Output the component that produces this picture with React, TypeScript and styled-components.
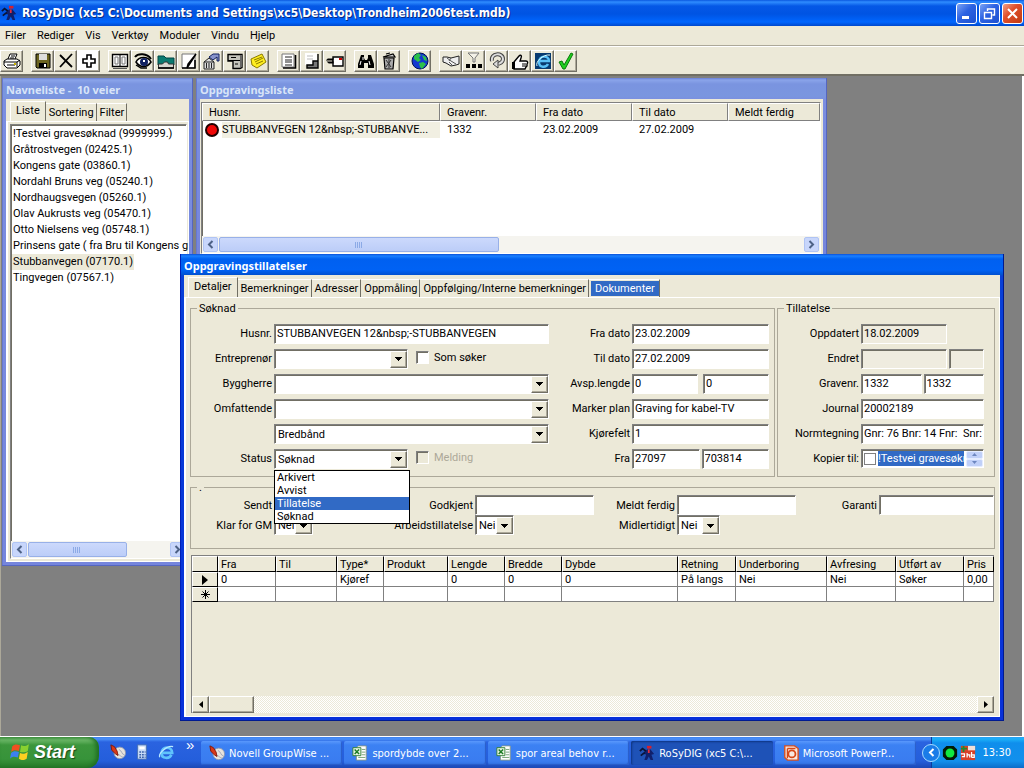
import React from "react";
import styled, { createGlobalStyle, css } from "styled-components";

const uiFont = `Roboto, "Liberation Sans", Arial, sans-serif`;
const tahoma = `"DejaVu Sans Condensed", "DejaVu Sans", sans-serif`;
const face = "#ece9d8";
const labelWidth = "83px";

const GlobalStyle = createGlobalStyle`
  * { box-sizing: border-box; }
  body { margin: 0; background: #808080; font: 11px/13px ${uiFont}; color: #000; }
  button, input, select { font: inherit; color: inherit; margin: 0; border-radius: 0; }
  button { padding: 0; }
  ul { margin: 0; padding: 0; list-style: none; }
`;

const raised = css`
  border: 1px solid;
  border-color: #fff #716f64 #716f64 #fff;
  box-shadow: inset -1px -1px 0 #aca899;
`;
const sunken = css`
  border: 1px solid;
  border-color: #808080 #fff #fff #808080;
  box-shadow: inset 1px 1px 0 #716f64;
`;

/* ---------- application frame ---------- */
const Screen = styled.div`
  display: flex;
  flex-direction: column;
  height: 100vh;
  overflow: hidden;
`;
const TitleBar = styled.header`
  display: flex;
  align-items: center;
  flex: none;
  height: 26px;
  padding: 0 1px 0 1px;
  gap: 5px;
  background: linear-gradient(#0a58e0 0, #2f8cff 2px, #0558e6 6px, #0054e3 14px, #0066ff 22px, #0048cc 26px);
`;
const AppTitle = styled.h1`
  flex: 1;
  margin: 0;
  font: bold 12px/18px ${tahoma};
  color: #fff;
  white-space: nowrap;
  text-shadow: 1px 1px 0 #0a2a80;
`;
const CaptionButtons = styled.div`
  display: flex;
  gap: 2px;
`;
const CaptionButton = styled.button<{ $close?: boolean }>`
  display: grid;
  place-items: center;
  width: 21px;
  height: 21px;
  border: 1px solid #fff;
  border-radius: 3px;
  background: ${(p) =>
    p.$close
      ? "linear-gradient(135deg, #f0a088, #e0502c 40%, #c03a10)"
      : "linear-gradient(135deg, #7ba3f5, #2c62e2 45%, #1c50d0)"};
`;
const MenuBar = styled.nav`
  display: flex;
  flex: none;
  gap: 11px;
  height: 20px;
  padding: 3px 5px;
  background: ${face};
  border-bottom: 1px solid #aca899;
`;
const MenuItem = styled.a`
  color: #000;
  text-decoration: none;
`;
const Toolbar = styled.div`
  display: flex;
  flex: none;
  gap: 8px;
  height: 30px;
  padding: 3px 0;
  background: ${face};
  border-top: 1px solid #fff;
  border-bottom: 2px solid #716f64;
`;
const ToolGroup = styled.div`
  display: flex;
`;
const ToolButton = styled.button<{ $light?: boolean }>`
  display: grid;
  place-items: center;
  width: 23px;
  height: 22px;
  background: ${(p) => (p.$light ? "#fff" : face)};
  ${raised}
`;
const Mdi = styled.main`
  position: relative;
  flex: 1;
  min-height: 0;
  overflow: hidden;
  background: #808080;
  border-left: 1px solid #aca899;
  border-right: 2px solid #fff;
`;

/* ---------- child windows ---------- */
const Win = styled.section<{ $x: number; $y: number; $w: number; $h: number; $active?: boolean }>`
  position: absolute;
  left: ${(p) => p.$x}px;
  top: ${(p) => p.$y}px;
  width: ${(p) => p.$w}px;
  height: ${(p) => p.$h}px;
  display: flex;
  flex-direction: column;
  padding: 0 4px 4px;
  background: ${(p) =>
    p.$active
      ? "linear-gradient(#0a50d8 0, #1a80ff 2px, #0060f0 5px, #0062f4 16px, #0050d0 21px, #0840d8 22px, #0831d9 100%)"
      : "linear-gradient(#6a80d8 0, #8aa4ea 2px, #7a94e0 6px, #7a96df 18px, #7b8ee0 22px, #7585dc 100%)"};
  box-shadow: inset -1px -1px 0 ${(p) => (p.$active ? "#001a90" : "#5566c0")}, inset 1px 0 0 ${(p) => (p.$active ? "#0020b8" : "#6678d0")};
`;
const WinTitle = styled.h2<{ $active?: boolean }>`
  flex: none;
  margin: 0;
  height: 21px;
  font: bold 11px/23px "Noto Sans", ${tahoma};
  color: ${(p) => (p.$active ? "#fff" : "#d8e4f8")};
  white-space: pre;
`;
const WinBody = styled.div<{ $pad?: string }>`
  flex: 1;
  min-height: 0;
  display: flex;
  flex-direction: column;
  padding: ${(p) => p.$pad ?? "0"};
  background: ${face};
`;
const TabStrip = styled.div`
  display: flex;
  align-items: flex-end;
  flex: none;
  height: 22px;
  padding-left: 4px;
`;
const Tab = styled.button<{ $selected?: boolean; $lit?: boolean }>`
  height: ${(p) => (p.$selected ? 20 : 18)}px;
  padding: ${(p) => (p.$selected ? "0 5px 2px 5px" : "0 2px 0 3px")};
  background: ${face};
  color: #000;
  border: 0;
  border-top: 1px solid #fff;
  border-right: 1px solid #716f64;
  white-space: nowrap;
  ${(p) => p.$selected && "border-left: 1px solid #fff;"}
  ${(p) => p.$lit && "padding: 1px 0 1px 2px; background: #316ac5 content-box; color: #fff;"}
`;
const TabText = styled.span<{ $lit?: boolean }>`
  display: block;
  padding: 0 ${(p) => (p.$lit ? 4 : 0)}px;
`;
const TabPane = styled.div<{ $pad: string }>`
  flex: 1;
  min-height: 0;
  display: flex;
  flex-direction: column;
  padding: ${(p) => p.$pad};
  border: 1px solid #fff;
  border-left-width: 2px;
`;

/* ---------- scroll bars ---------- */
const ScrollBar = styled.div`
  display: flex;
  flex: none;
  height: 17px;
  padding: 1px;
  gap: 1px;
  background: #f5f4ef;
`;
const ScrollArrow = styled.button`
  display: grid;
  place-items: center;
  flex: none;
  width: 15px;
  border: 1px solid #b0c4f4;
  border-radius: 2px;
  background: #c8d6fb;
`;
const ScrollTrack = styled.div`
  flex: 1;
  display: flex;
`;
const ScrollThumb = styled.div<{ $w: string }>`
  display: grid;
  place-items: center;
  width: ${(p) => p.$w};
  border: 1px solid #98b0e8;
  border-radius: 2px;
  background: linear-gradient(#ccd9fc, #bccdf8);
`;
const ClassicBar = styled.div`
  display: flex;
  flex: none;
  height: 17px;
  background: repeating-conic-gradient(#fff 0 25%, #ece9d8 0 50%) 0 0 / 2px 2px;
`;
const ClassicArrow = styled.button`
  display: grid;
  place-items: center;
  width: 17px;
  background: ${face};
  ${raised}
`;
const ClassicThumb = styled.div`
  width: 45px;
  margin-right: auto;
  background: ${face};
  ${raised}
`;

/* ---------- lists ---------- */
const ListFrame = styled.div`
  flex: 1;
  min-height: 0;
  display: flex;
  flex-direction: column;
  background: #fff;
  ${sunken}
`;
const Names = styled.ul`
  flex: 1;
  padding: 1px 0 0 1px;
`;
const NameItem = styled.li<{ $selected?: boolean }>`
  width: max-content;
  padding: 0 1px;
  line-height: 16px;
  white-space: nowrap;
  background: ${(p) => (p.$selected ? face : "transparent")};
`;
const DigTable = styled.table`
  width: 100%;
  table-layout: fixed;
  border-spacing: 0;
  th, td { padding: 0 6px; text-align: left; font-weight: normal; white-space: nowrap; }
  th { height: 18px; background: ${face}; border: 1px solid; border-color: #fff #808080 #808080 #fff; }
  td { height: 17px; padding: 0 7px; }
  td:first-child { padding: 0 0 0 3px; }
`;
const HouseCell = styled.div`
  display: flex;
  align-items: center;
  gap: 3px;
`;
const HouseText = styled.span`
  flex: 1;
  line-height: 16px;
  background: #f1efe2;
`;
const RedDot = styled.span`
  flex: none;
  width: 14px;
  height: 14px;
  border: 2px solid #200;
  border-radius: 50%;
  background: #f00808;
`;
const Spacer = styled.div`
  flex: 1;
`;

/* ---------- form ---------- */
const Groups = styled.div`
  display: flex;
  gap: 2px;
`;
const Group = styled.fieldset<{ $grow?: boolean; $pad: string; $top?: number }>`
  flex: ${(p) => (p.$grow ? "1" : "none")};
  display: flex;
  min-width: 0;
  margin: ${(p) => p.$top ?? 0}px 0 0;
  padding: ${(p) => p.$pad};
  border: 1px solid #aca899;
`;
const Legend = styled.legend`
  margin-left: 6px;
  padding: 0 2px;
  height: 13px;
`;
const Stack = styled.div<{ $w: number }>`
  width: ${(p) => p.$w}px;
`;
const Row = styled.div`
  display: grid;
  grid-template-columns: ${labelWidth} 1fr;
  align-items: center;
  height: 25px;
`;
const Label = styled.label`
  padding-right: 2px;
  text-align: right;
  white-space: nowrap;
`;
const Cell = styled.div`
  position: relative;
  display: flex;
  align-items: center;
  gap: 2px;
  min-width: 0;
`;
const TextBox = styled.input<{ $w?: number }>`
  flex: ${(p) => (p.$w ? "none" : "1")};
  width: ${(p) => (p.$w ? p.$w + "px" : "100%")};
  min-width: 0;
  height: 20px;
  padding: 0 0 0 2px;
  outline: 0;
  background: ${(p) => (p.readOnly ? "#efecdf" : "#fff")};
  ${sunken}
`;
const ComboFrame = styled.div<{ $w?: number }>`
  position: relative;
  width: ${(p) => (p.$w ? p.$w + "px" : "100%")};
  height: 20px;
`;
const ComboSelect = styled.select`
  appearance: none;
  width: 100%;
  height: 20px;
  padding: 1px 18px 0 3px;
  outline: 0;
  background: #fff;
  ${sunken}
`;
const ComboArrow = styled.span`
  position: absolute;
  top: 2px;
  right: 1px;
  bottom: 1px;
  width: 17px;
  display: grid;
  place-items: center;
  pointer-events: none;
  background: ${face};
  ${raised}
`;
const CheckLabel = styled.label<{ $off?: boolean }>`
  display: flex;
  align-items: center;
  gap: 5px;
  margin-left: 6px;
  padding-bottom: 3px;
  white-space: nowrap;
  color: ${(p) => (p.$off ? "#aca899" : "#000")};
`;
const CheckBox = styled.input<{ $flat?: boolean }>`
  appearance: none;
  flex: none;
  width: 13px;
  height: 13px;
  background: #fff;
  ${sunken}
  ${(p) => p.disabled && `background: ${face};`}
  ${(p) => p.$flat && "width: 12px; height: 12px; border-color: #808080; box-shadow: none;"}
`;
const DropList = styled.ul`
  position: absolute;
  z-index: 5;
  top: 21px;
  left: 0;
  width: 136px;
  background: #fff;
  border: 1px solid #000;
`;
const DropItem = styled.li<{ $selected?: boolean }>`
  height: 13px;
  padding-left: 2px;
  color: ${(p) => (p.$selected ? "#fff" : "#000")};
  background: ${(p) => (p.$selected ? "#316ac5" : "#fff")};
`;
const CopyBox = styled.div`
  display: flex;
  align-items: center;
  flex: 1;
  min-width: 0;
  height: 19px;
  padding-left: 2px;
  gap: 2px;
  background: #fff;
  ${sunken}
`;
const CopyText = styled.span`
  flex: 1;
  overflow: hidden;
  line-height: 15px;
  white-space: nowrap;
  color: #fff;
  background: #316ac5;
`;
const Spinner = styled.span`
  display: grid;
  grid-template-rows: 8px 8px;
  width: 17px;
`;
const SpinButton = styled.button`
  display: grid;
  place-items: center;
  border: 1px solid #e4ecff;
  border-radius: 2px;
  background: #c0d0f8;
`;
const DateGrid = styled.div`
  flex: 1;
  display: grid;
  grid-template-columns: 83px 119px 82px 119px 83px 119px 83px 1fr;
  grid-auto-rows: 20px;
  align-items: center;
`;

/* ---------- data grid ---------- */
const GridFrame = styled.div`
  flex: 1;
  min-height: 0;
  display: flex;
  flex-direction: column;
  margin: 6px 1px 0 1px;
  border-top: 1px solid #808080;
  border-left: 1px solid #808080;
  overflow: hidden;
`;
const DataTable = styled.table`
  width: 100%;
  table-layout: fixed;
  border-spacing: 0;
  th, td { height: 15px; padding: 0 2px; text-align: left; font-weight: normal; line-height: 13px; white-space: nowrap; overflow: hidden; }
  th { background: ${face}; border: 1px solid; border-color: #fff #000 #000 #fff; }
  thead th { height: 16px; }
  tbody th { padding: 0; text-align: center; }
  td { background: #fff; border-right: 1px solid #808080; border-bottom: 1px solid #808080; padding-left: 3px; }
`;
const RowMark = styled.svg`
  display: block;
  margin: 0 auto;
`;

/* ---------- task bar ---------- */
const TaskBar = styled.footer`
  display: flex;
  flex: none;
  height: 32px;
  border-top: 1px solid #fff;
  background: linear-gradient(#3c80ee 0, #4a90f8 2px, #2a63e0 5px, #245edb 24px, #1c48b4 31px);
  font-family: ${tahoma};
  color: #fff;
`;
const StartButton = styled.button`
  display: flex;
  align-items: center;
  gap: 4px;
  width: 99px;
  padding: 0 0 2px 10px;
  border: 0;
  border-radius: 0 10px 12px 0;
  background: linear-gradient(#5aac5a 0, #6cb868 3px, #3c963c 8px, #37933a 22px, #267a28 31px);
  box-shadow: inset -3px 0 4px #1f6e22;
  font: italic bold 18px/24px "Liberation Sans", sans-serif;
  color: #fff;
  text-shadow: 1px 1px 1px #1a4a1a;
`;
const QuickLaunch = styled.div`
  display: flex;
  align-items: center;
  gap: 8px;
  width: 102px;
  padding: 0 0 2px 11px;
`;
const Chevrons = styled.span`
  align-self: flex-start;
  margin-left: 4px;
  font: 15px/15px "Liberation Sans", sans-serif;
`;
const Tasks = styled.div`
  flex: 1;
  display: flex;
  gap: 2px;
  padding: 4px 15px 3px 0;
  min-width: 0;
`;
const Task = styled.button<{ $active?: boolean }>`
  flex: 1;
  display: flex;
  align-items: center;
  gap: 4px;
  min-width: 0;
  padding-left: 8px;
  border: 0;
  border-radius: 2px;
  color: #fff;
  white-space: nowrap;
  background: ${(p) => (p.$active ? "#1e52b7" : "linear-gradient(#5a98fc, #3c81f3 4px, #3a7cf0 20px, #3070e0)")};
  box-shadow: ${(p) => (p.$active ? "inset 1px 1px 2px #0e3480" : "inset -1px -1px 1px #2a5cc8")};
`;
const Tray = styled.div`
  display: flex;
  align-items: center;
  width: 93px;
  gap: 2px;
  padding-right: 13px;
  border-left: 1px solid #0c3c9c;
  background: linear-gradient(#2aa0f4 0, #1cb0f8 2px, #0f8eec 6px, #1290ec 24px, #0c6cc8 31px);
`;
const TrayToggle = styled.button`
  flex: none;
  display: grid;
  place-items: center;
  width: 18px;
  height: 18px;
  margin-left: -10px;
  border: 1px solid #a8dcff;
  border-radius: 50%;
  background: #1a7ce8;
`;
const Clock = styled.time`
  margin-left: auto;
`;

/* ---------- drawings ---------- */
const glyphs: Record<string, React.ReactNode> = {
  print: <><path d="M5 7l2-5h7l-2 5M1 9l3-2h10l3 2v4l-3 3H4l-3-3z" fill="#fff" stroke="#000" /><path d="M1 10h13v5M14 10l3-2M4 13h8M8 4h4M7 6h4" fill="none" stroke="#000" /><path d="M11 11h2v2h-2z" fill="#c8b400" /></>,
  save: <><path d="M2 2h14v14H3l-1-1z" fill="#6b6420" stroke="#000" /><path d="M5 2h8v6H5z" fill="#ddd" /><path d="M5 11h8v5H5z" fill="#000" /><path d="M10 12h2v3h-2z" fill="#fff" /></>,
  cut: <path d="M3 3l12 12M15 2L3 15" stroke="#000" strokeWidth="1.8" fill="none" />,
  plus: <path d="M7 3h4v4h4v4h-4v4H7v-4H3V7h4z" fill="#fff" stroke="#000" strokeWidth="1.6" />,
  book: <><path d="M1.500 2.500h15v12h-15z" fill="#fff" stroke="#000" strokeWidth="1.4" /><path d="M9 3v11" stroke="#000" /><path d="M4 5h3v7H4zM11 5h3v7h-3z" fill="none" stroke="#777" /><path d="M2 16.500h14" stroke="#555" /></>,
  eye: <><path d="M1 5c3-4 12-4 16 2" fill="none" stroke="#000" strokeWidth="2" /><path d="M2 10c3-6 12-6 15 0-4 6-11 6-15 0z" fill="#fff" stroke="#000" strokeWidth="1.6" /><circle cx="10" cy="10" r="4" fill="#102060" /><path d="M9 8h2v2H9z" fill="#fff" /><path d="M2 13l5 3h6" fill="none" stroke="#000" strokeWidth="1.4" /></>,
  folder: <><path d="M1 4h6l2 2h8v7H1z" fill="#0a7a70" stroke="#044" /><path d="M1.500 16v-4h4l2-2h3l1 2h5v4z" fill="#d8d8d0" stroke="#333" /><path d="M1 16h16" stroke="#000" strokeWidth="1.6" /></>,
  pencil: <><path d="M2 2h13v14H2z" fill="#fff" stroke="#777" /><path d="M16 2L9 13l-2 3 1-4z" fill="#fff" stroke="#000" strokeWidth="1.4" /><path d="M2 16h13V8" stroke="#000" fill="none" strokeWidth="1.6" /></>,
  bank: <><path d="M1 10l5-4 5 4v7H1z" fill="#ddd" stroke="#222" /><path d="M3.500 11v5M6 11v5M8.500 11v5M1 10h10" stroke="#222" /><path d="M6 5l4-3h6v7h-2V5l-4 3z" fill="#8894cc" stroke="#102060" /></>,
  cabinet: <><path d="M2 2.500h14v13l-2 1H7V9H2z" fill="#c4c4bc" stroke="#000" strokeWidth="1.4" /><path d="M14 3h2v12l-2 1z" fill="#666" /><path d="M2 8.500h12M5 5.500h5M9 12h3" stroke="#000" /></>,
  note: <><path d="M2 7l11-5 4 8-9 6-5-3z" fill="#ffee20" stroke="#8a7a00" /><path d="M5 8l8-3M6 10l8-4M7 12l7-3" stroke="#8a7a00" /></>,
  doc: <><path d="M2 2h12v13H2z" fill="#fff" stroke="#777" /><path d="M15.500 3v13H3" fill="none" stroke="#000" strokeWidth="1.6" /><path d="M5 5h7M5 8h7M5 10h7M5 13h7" stroke="#222" /></>,
  page: <><path d="M2 1h12v12H2z" fill="#fff" /><path d="M15 2v14H4v-3h6V9h5" fill="#777" stroke="#000" strokeWidth="1.4" /><path d="M4 4h6M4 7h6" stroke="#bbb" /></>,
  letter: <><path d="M7 5h10v9H7z" fill="#fff" stroke="#000" strokeWidth="1.4" /><path d="M8 7H2l-1 1h6v3H3l-1-1h5" fill="#fff" stroke="#000" strokeWidth="1.2" /><path d="M13 6h3v2h-3z" fill="#c00" /></>,
  find: <><path d="M4 3h3v3l1 2h2l1-2V3h3l3 9v4h-6v-5H7v5H1v-4z" fill="#000" /><path d="M4 9l-1 4M12 9l1 4M6 5v3" stroke="#fff" /></>,
  trash: <><path d="M4 6h10l-1 11H5z" fill="#aaa" stroke="#000" strokeWidth="1.2" /><path d="M3 5l10-3 2 3zM6 2l4-1" fill="#ccc" stroke="#000" strokeWidth="1.2" /><path d="M6 8l5 7M11 8l-5 7M9 7v9" stroke="#333" /></>,
  globe: <><circle cx="9" cy="9" r="8" fill="#1438d0" stroke="#001050" /><path d="M3 4l4-3 3 2-2 3 2 2-3 2-4-3zM11 3l4 2 1 4-3-1zM8 11l4-1 3 2-4 5-2-2z" fill="#2cc04a" /></>,
  shake: <><path d="M1 5h4l4 1 4-1 4-1v8l-3 1-5 1-5-3-3-1z" fill="#eee" stroke="#222" /><path d="M5 6l4 3 5 3M7 10l3 3M9 6l-2 3" fill="none" stroke="#555" /></>,
  filter: <><path d="M3 1h11l-4 5v4H8V6z" fill="#f4f2e8" stroke="#777" /><path d="M1 12h4v4H1zM7 12h4v4H7zM13 12h4v4h-4z" fill="#000" /></>,
  loop: <><path d="M4 9c-2-8 11-9 11-2 0 4-3 4-5 5" fill="none" stroke="#444" strokeWidth="4" /><path d="M4 9c-2-8 11-9 11-2 0 4-3 4-5 5" fill="none" stroke="#ddd" strokeWidth="2" /><path d="M10 8v8l-5-4z" fill="#ddd" stroke="#444" /></>,
  thumb: <><path d="M3 10l5-6c2-2 3 0 2 2l-1 3h6c2 0 2 2 1 3v2l-1 1-1 2H3z" fill="#fff" stroke="#000" strokeWidth="1.4" /><path d="M1 10h3v7H1z" fill="#000" /><path d="M11 12h4M11 14h4" stroke="#000" /></>,
  ie: <><path d="M1 1h16v16H1z" fill="#083a70" /><path d="M14 12c-2 4-9 4-9-2 0-7 10-7 10-1H6" fill="none" stroke="#58c0f8" strokeWidth="2.4" /><path d="M3 14C1 10 9 2 16 3" fill="none" stroke="#dff" /></>,
  check: <path d="M2 10l3-1 2 4 7-12 2 1-8 15H6z" fill="#20d020" stroke="#0a7a0a" />,
  surveyor: <><path d="M1 7l3-3 4 3-2 3M2 12l5-4" stroke="#081438" strokeWidth="2" fill="none" /><path d="M9 1h5v3H9z" fill="#d8202c" /><path d="M9 5h4l4 5-3 1 2 6h-3l-2-4-2 4H6l2-6-2-2z" fill="#10206c" /><path d="M10 5h2v4h-2z" fill="#e03040" /></>,
  groupwise: <><circle cx="11" cy="10" r="6.5" fill="#e8e4dc" stroke="#8a96b0" /><path d="M10 6c4 2 3 6 6 6M7 12c3-2 5 3 7 2" stroke="#9aa2b8" fill="none" /><path d="M1 1l4 2 3 5 1 5-3-2-4-4z" fill="#d83818" stroke="#801808" /></>,
  calc: <><path d="M4 1h10v16H4z" fill="#c8dcf8" stroke="#4870b0" /><path d="M6 3h6v3H6z" fill="#fff" /><path d="M6 9h7M6 12h7M6 15h7" stroke="#3860a8" strokeWidth="1.6" strokeDasharray="2 1" /></>,
  explorer: <><path d="M15 12c-2 5-11 5-11-2 0-8 12-8 12 0H5" fill="none" stroke="#60c4fc" strokeWidth="3" /><path d="M2 15C0 11 10 1 17 3" fill="none" stroke="#b8e8ff" strokeWidth="1.4" /></>,
  excel: <><path d="M7 1h9v16H5V3z" fill="#fff" stroke="#8a9a8a" /><path d="M11 5h4M11 8h4M11 11h4M7 14h8" stroke="#6a9a6a" /><path d="M1 3h9v9H1z" fill="#e8f4e0" stroke="#2a7a30" /><path d="M3 5l5 5M8 5l-5 5" stroke="#1a7a24" strokeWidth="1.6" /></>,
  ppt: <><path d="M2 1h11l4 3v13H5l-3-3z" fill="#f8e8e0" stroke="#d85020" strokeWidth="1.6" /><circle cx="10" cy="10" r="4" fill="none" stroke="#d84818" strokeWidth="2" /><path d="M5 4h9M5 4v11" stroke="#d84818" strokeWidth="1.6" /></>,
  flag: <><path d="M2 4c2-2 4-2 7-1L8 8C5 7 3 7 1 9z" fill="#f05020" /><path d="M10 3c2 1 4 1 7-1l-1 6c-3 2-5 1-7 1z" fill="#88d030" /><path d="M1 10c2-2 4-2 7-1l-1 5c-3-1-5-1-7 1z" fill="#3c80f0" /><path d="M9 10c2 1 4 1 7-1l-1 6c-3 2-5 1-7 0z" fill="#fcd020" /></>,
  greendot: <><path d="M5 1h8l4 4v8l-4 4H5l-4-4V5z" fill="#031a06" /><circle cx="9" cy="9" r="5" fill="#10e840" /></>,
  library: <><path d="M1 1h16v16H1z" fill="#d84028" /><path d="M9 1h8v5H9z" fill="#f0e0d8" /><path d="M1 4h7M4 1v7" stroke="#208a30" strokeWidth="2" /><path d="M1 10h4v3H2M8 9v5M8 11h3v3M13 8v6M13 11h3v3h-3" stroke="#fff" strokeWidth="1.4" fill="none" /></>,
};

const Icon = ({ name, size = 18 }: { name: string; size?: number }) => (
  <svg width={size} height={size} viewBox="0 0 18 18" aria-hidden="true">{glyphs[name]}</svg>
);
const DownArrow = () => (
  <svg width="7" height="4" viewBox="0 0 7 4" shapeRendering="crispEdges"><path d="M0 0h7L3.5 4z" /></svg>
);
const Chevron = ({ right, color = "#4d6185" }: { right?: boolean; color?: string }) => (
  <svg width="7" height="9" viewBox="0 0 7 9">
    <path d={right ? "M1.5 1L5 4.5 1.5 8" : "M5.5 1L2 4.5 5.5 8"} fill="none" stroke={color} strokeWidth="2" />
  </svg>
);
const Grip = () => (
  <svg width="8" height="6" viewBox="0 0 8 6"><path d="M.5 0v6M2.5 0v6M4.5 0v6M6.5 0v6" stroke="#8caae6" /></svg>
);

const LunaScroll = ({ thumb }: { thumb: string }) => (
  <ScrollBar>
    <ScrollArrow aria-label="Rull til venstre"><Chevron /></ScrollArrow>
    <ScrollTrack><ScrollThumb $w={thumb}><Grip /></ScrollThumb></ScrollTrack>
    <ScrollArrow aria-label="Rull til høyre"><Chevron right /></ScrollArrow>
  </ScrollBar>
);

const Combo = ({ id, value = "", width, options }: { id: string; value?: string; width?: number; options?: string[] }) => (
  <ComboFrame $w={width}>
    <ComboSelect id={id} defaultValue={value}>
      {(options ?? [value]).map((o) => <option key={o}>{o}</option>)}
    </ComboSelect>
    <ComboArrow><DownArrow /></ComboArrow>
  </ComboFrame>
);

const Field = ({ id, label, children }: { id: string; label?: string; children: React.ReactNode }) => (
  <Row>
    {label ? <Label htmlFor={id}>{label}</Label> : <span />}
    <Cell>{children}</Cell>
  </Row>
);

/* ---------- data ---------- */
const menus = ["Filer", "Rediger", "Vis", "Verktøy", "Moduler", "Vindu", "Hjelp"];
const tools = [
  ["print"],
  ["save", "cut", "plus"],
  ["book", "eye", "folder", "pencil", "bank", "cabinet", "note"],
  ["doc", "page", "letter"],
  ["find", "trash"],
  ["globe"],
  ["shake", "filter", "loop", "thumb", "ie", "check"],
];
const roads = [
  "!Testvei gravesøknad (9999999.)", "Gråtrostvegen (02425.1)", "Kongens gate (03860.1)",
  "Nordahl Bruns veg (05240.1)", "Nordhaugsvegen (05260.1)", "Olav Aukrusts veg (05470.1)",
  "Otto Nielsens veg (05748.1)", "Prinsens gate ( fra Bru til Kongens g", "Stubbanvegen (07170.1)",
  "Tingvegen (07567.1)",
];
const statuses = ["Arkivert", "Avvist", "Tillatelse", "Søknad"];
const columns: [string, number, string][] = [
  ["Fra", 58, "0"], ["Til", 61, ""], ["Type*", 47, "Kjøref"], ["Produkt", 64, ""], ["Lengde", 57, "0"],
  ["Bredde", 57, "0"], ["Dybde", 116, "0"], ["Retning", 58, "På langs"], ["Underboring", 91, "Nei"],
  ["Avfresing", 69, "Nei"], ["Utført av", 68, "Søker"], ["Pris", 0, "0,00"],
];
const tasks: [string, string][] = [
  ["groupwise", "Novell GroupWise ..."], ["excel", "spordybde over 2..."], ["excel", "spor areal behov r..."],
  ["surveyor", "RoSyDIG (xc5 C:\\..."], ["ppt", "Microsoft PowerP..."],
];

const NameWindow = () => (
  <Win $x={1} $y={2} $w={191} $h={488}>
    <WinTitle>{"Navneliste -  10 veier"}</WinTitle>
    <WinBody>
      <TabStrip>
        <Tab $selected><TabText>Liste</TabText></Tab>
        <Tab><TabText>Sortering</TabText></Tab>
        <Tab><TabText>Filter</TabText></Tab>
      </TabStrip>
      <TabPane $pad="2px 1px 2px 2px">
        <ListFrame>
          <Names>
            {roads.map((r) => <NameItem key={r} $selected={r.startsWith("Stubban")}>{r}</NameItem>)}
          </Names>
          <LunaScroll thumb="70%" />
        </ListFrame>
      </TabPane>
    </WinBody>
  </Win>
);

const DigWindow = () => (
  <Win $x={195} $y={2} $w={631} $h={181}>
    <WinTitle>Oppgravingsliste</WinTitle>
    <WinBody $pad="3px 2px 1px 1px">
      <ListFrame>
        <DigTable>
          <colgroup><col width="238" /><col width="96" /><col width="96" /><col width="96" /><col /></colgroup>
          <thead>
            <tr>{["Husnr.", "Gravenr.", "Fra dato", "Til dato", "Meldt ferdig"].map((h) => <th key={h}>{h}</th>)}</tr>
          </thead>
          <tbody>
            <tr>
              <td><HouseCell><RedDot /><HouseText>STUBBANVEGEN 12&amp;nbsp;-STUBBANVE...</HouseText></HouseCell></td>
              <td>1332</td><td>23.02.2009</td><td>27.02.2009</td><td />
            </tr>
          </tbody>
        </DigTable>
        <Spacer />
        <LunaScroll thumb="48%" />
      </ListFrame>
    </WinBody>
  </Win>
);

const PermitWindow = () => (
  <Win $active $x={179} $y={178} $w={824} $h={467}>
    <WinTitle $active>Oppgravingstillatelser</WinTitle>
    <WinBody>
      <TabStrip>
        <Tab $selected><TabText>Detaljer</TabText></Tab>
        {["Bemerkninger", "Adresser", "Oppmåling", "Oppfølging/Interne bemerkninger"].map((t) => (
          <Tab key={t}><TabText>{t}</TabText></Tab>
        ))}
        <Tab $lit><TabText $lit>Dokumenter</TabText></Tab>
      </TabStrip>
      <TabPane $pad="4px 4px 3px 4px">
        <Groups>
          <Group $grow $pad="6px 0 5px">
            <Legend>Søknad</Legend>
            <Stack $w={358}>
              <Field id="husnr" label="Husnr."><TextBox id="husnr" defaultValue="STUBBANVEGEN 12&amp;nbsp;-STUBBANVEGEN" /></Field>
              <Field id="entreprenor" label="Entreprenør">
                <Combo id="entreprenor" width={134} />
                <CheckLabel><CheckBox type="checkbox" />Som søker</CheckLabel>
              </Field>
              <Field id="byggherre" label="Byggherre"><Combo id="byggherre" /></Field>
              <Field id="omfattende" label="Omfattende"><Combo id="omfattende" /></Field>
              <Field id="omfang"><Combo id="omfang" value="Bredbånd" /></Field>
              <Field id="status" label="Status">
                <Combo id="status" width={134} value="Søknad" options={statuses} />
                <CheckLabel $off><CheckBox type="checkbox" disabled />Melding</CheckLabel>
                <DropList>
                  {statuses.map((s) => <DropItem key={s} $selected={s === "Tillatelse"}>{s}</DropItem>)}
                </DropList>
              </Field>
            </Stack>
            <Stack $w={220}>
              <Field id="fradato" label="Fra dato"><TextBox id="fradato" defaultValue="23.02.2009" /></Field>
              <Field id="tildato" label="Til dato"><TextBox id="tildato" defaultValue="27.02.2009" /></Field>
              <Field id="avsp" label="Avsp.lengde">
                <TextBox id="avsp" defaultValue="0" $w={66} /><Spacer /><TextBox aria-label="Avsp.lengde 2" defaultValue="0" $w={66} />
              </Field>
              <Field id="marker" label="Marker plan"><TextBox id="marker" defaultValue="Graving for kabel-TV" /></Field>
              <Field id="kjorefelt" label="Kjørefelt"><TextBox id="kjorefelt" defaultValue="1" /></Field>
              <Field id="fra" label="Fra"><TextBox id="fra" defaultValue="27097" /><TextBox aria-label="Fra 2" defaultValue="703814" /></Field>
            </Stack>
          </Group>
          <Group $pad="6px 10px 5px 0">
            <Legend>Tillatelse</Legend>
            <Stack $w={206}>
              <Field id="oppdatert" label="Oppdatert"><TextBox id="oppdatert" readOnly value="18.02.2009" $w={86} /></Field>
              <Field id="endret" label="Endret"><TextBox id="endret" readOnly $w={86} /><TextBox aria-label="Endret av" readOnly /></Field>
              <Field id="gravenr" label="Gravenr."><TextBox id="gravenr" defaultValue="1332" /><TextBox aria-label="Gravenr. 2" defaultValue="1332" /></Field>
              <Field id="journal" label="Journal"><TextBox id="journal" defaultValue="20002189" /></Field>
              <Field id="norm" label="Normtegning"><TextBox id="norm" defaultValue="Gnr: 76 Bnr: 14 Fnr:  Snr:" /></Field>
              <Field id="kopier" label="Kopier til:">
                <CopyBox>
                  <CheckBox id="kopier" type="checkbox" $flat />
                  <CopyText>!Testvei gravesøkn</CopyText>
                  <Spinner>
                    <SpinButton aria-label="Opp"><svg width="5" height="3"><path d="M0 3h5L2.5 0z" fill="#6c86c0" /></svg></SpinButton>
                    <SpinButton aria-label="Ned"><svg width="5" height="3"><path d="M0 0h5L2.5 3z" fill="#6c86c0" /></svg></SpinButton>
                  </Spinner>
                </CopyBox>
              </Field>
            </Stack>
          </Group>
        </Groups>
        <Group $pad="1px 0 13px" $top={4}>
          <Legend>.</Legend>
          <DateGrid>
            <Label htmlFor="sendt">Sendt</Label><TextBox id="sendt" />
            <Label htmlFor="godkjent">Godkjent</Label><TextBox id="godkjent" />
            <Label htmlFor="meldt">Meldt ferdig</Label><TextBox id="meldt" />
            <Label htmlFor="garanti">Garanti</Label><TextBox id="garanti" />
            <Label htmlFor="klar">Klar for GM</Label><Combo id="klar" value="Nei" width={39} />
            <Label htmlFor="arbeid">Arbeidstillatelse</Label><Combo id="arbeid" value="Nei" width={39} />
            <Label htmlFor="midl">Midlertidigt</Label><Combo id="midl" value="Nei" width={43} />
          </DateGrid>
        </Group>
        <GridFrame>
          <DataTable>
            <colgroup><col width="26" />{columns.map(([n, w]) => <col key={n} width={w || undefined} />)}</colgroup>
            <thead><tr><th />{columns.map(([n]) => <th key={n}>{n}</th>)}</tr></thead>
            <tbody>
              <tr>
                <th><RowMark width="6" height="10"><path d="M0 0l6 5-6 5z" /></RowMark></th>
                {columns.map(([n, , v]) => <td key={n}>{v}</td>)}
              </tr>
              <tr>
                <th><RowMark width="9" height="9"><path d="M4.5 0v9M0 4.5h9M1.5 1.5l6 6M7.5 1.5l-6 6" stroke="#000" /></RowMark></th>
                {columns.map(([n]) => <td key={n} />)}
              </tr>
            </tbody>
          </DataTable>
          <Spacer />
          <ClassicBar>
            <ClassicArrow aria-label="Rull til venstre"><svg width="4" height="7"><path d="M4 0v7L0 3.5z" /></svg></ClassicArrow>
            <ClassicThumb />
            <ClassicArrow aria-label="Rull til høyre"><svg width="4" height="7"><path d="M0 0v7l4-3.5z" /></svg></ClassicArrow>
          </ClassicBar>
        </GridFrame>
      </TabPane>
    </WinBody>
  </Win>
);

export default function App() {
  return (
    <Screen>
      <GlobalStyle />
      <TitleBar>
        <Icon name="surveyor" size={16} />
        <AppTitle>RoSyDIG (xc5 C:\Documents and Settings\xc5\Desktop\Trondheim2006test.mdb)</AppTitle>
        <CaptionButtons>
          <CaptionButton aria-label="Minimer"><svg width="13" height="13"><path d="M2 9h7v3H2z" fill="#fff" /></svg></CaptionButton>
          <CaptionButton aria-label="Gjenopprett"><svg width="13" height="13"><path d="M4.5 4V2h7v6h-2M1.5 5.5h7v6h-7zM4 2h8M1 5.5h8" fill="none" stroke="#fff" strokeWidth="1.4" /></svg></CaptionButton>
          <CaptionButton $close aria-label="Lukk"><svg width="13" height="13"><path d="M2 2l9 9M11 2l-9 9" stroke="#fff" strokeWidth="2" /></svg></CaptionButton>
        </CaptionButtons>
      </TitleBar>
      <MenuBar>{menus.map((m) => <MenuItem key={m} href="#">{m}</MenuItem>)}</MenuBar>
      <Toolbar>
        {tools.map((g) => (
          <ToolGroup key={g[0]}>
            {g.map((t) => <ToolButton key={t} aria-label={t} $light={t === "plus"}><Icon name={t} /></ToolButton>)}
          </ToolGroup>
        ))}
      </Toolbar>
      <Mdi>
        <NameWindow />
        <DigWindow />
        <PermitWindow />
      </Mdi>
      <TaskBar>
        <StartButton><Icon name="flag" size={20} />Start</StartButton>
        <QuickLaunch>
          <Icon name="groupwise" size={16} /><Icon name="calc" size={16} /><Icon name="explorer" size={16} /><Chevrons>»</Chevrons>
        </QuickLaunch>
        <Tasks>
          {tasks.map(([icon, text]) => (
            <Task key={text} $active={icon === "surveyor"}><Icon name={icon} size={16} />{text}</Task>
          ))}
        </Tasks>
        <Tray>
          <TrayToggle aria-label="Vis skjulte ikoner"><Chevron color="#fff" /></TrayToggle>
          <Icon name="greendot" size={16} /><Icon name="library" size={16} />
          <Clock>13:30</Clock>
        </Tray>
      </TaskBar>
    </Screen>
  );
}
